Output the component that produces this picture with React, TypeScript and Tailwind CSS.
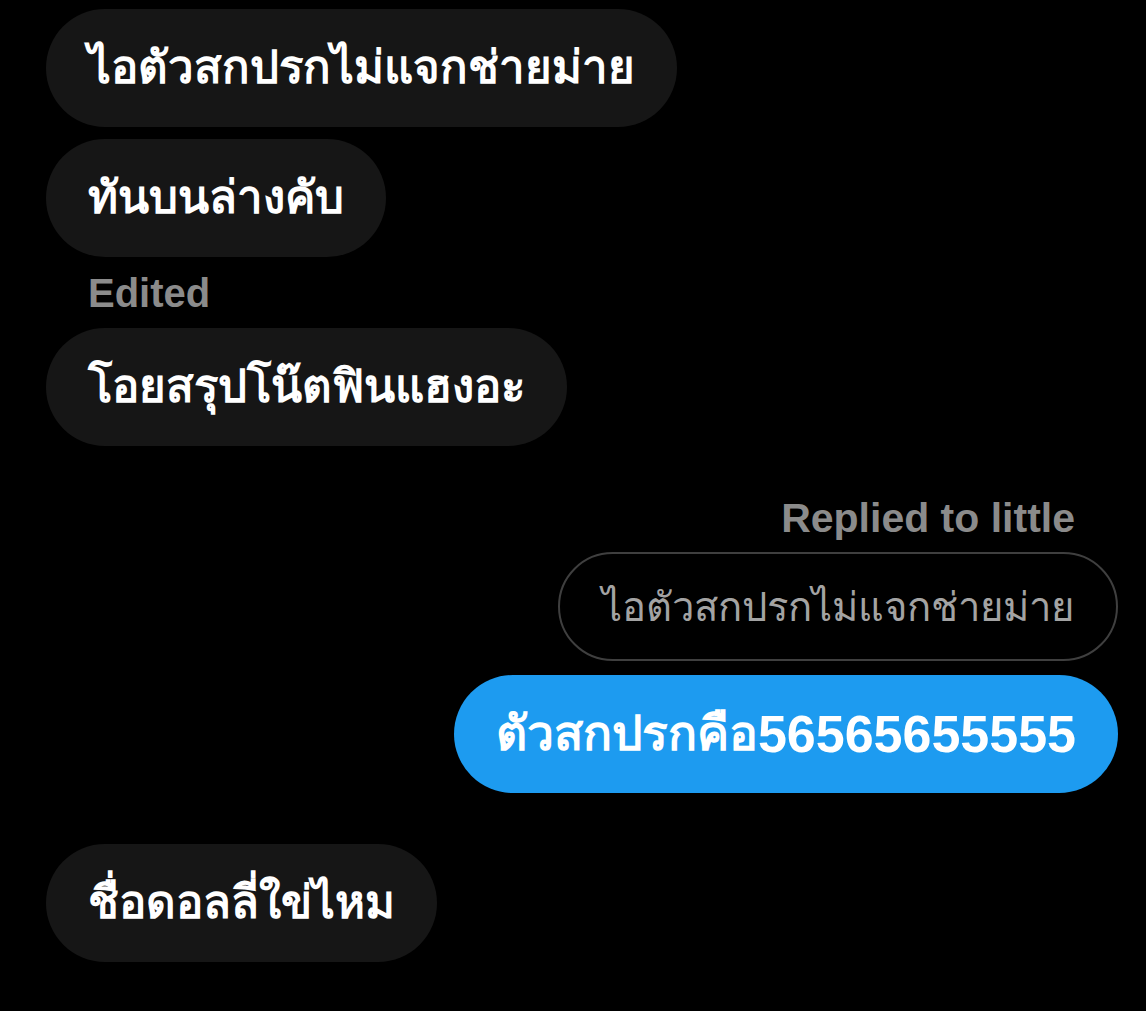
export default function App() {
  return (
    <div className="min-h-[1011px] w-[1146px] bg-black font-['Liberation_Sans',sans-serif] text-white">
      <div className="flex flex-col items-start pt-[9px]">
        <Bubble text="ไอตัวสกปรกไม่แจกช่ายม่าย" />
        <div className="mt-[12px]">
          <Bubble text="ทันบนล่างคับ" />
        </div>
        <p className="ml-[88px] mt-[14px] text-[40px] font-bold leading-[44px] text-[#8b8b8b]">Edited</p>
        <div className="mt-[13px]">
          <Bubble text="โอยสรุปโน๊ตฟินแฮงอะ" />
        </div>

        <div className="mt-[50px] flex w-full flex-col items-end pr-[28px]">
          <p className="mr-[43px] text-[41px] font-bold leading-[44px] text-[#8b8b8b]">Replied to little</p>
          <div className="mt-[12px] flex h-[109px] items-center rounded-full border-2 border-[#3f3f3f] px-[42px] text-[40px] text-[#a3a3a3]">
            ไอตัวสกปรกไม่แจกช่ายม่าย
          </div>
          <div className="mt-[14px] flex h-[118px] items-center rounded-full bg-[#1d9bf0] px-[42px] text-[48px] font-bold">
            ตัวสกปรกคือ<span className="text-[52px]">56565655555</span>
          </div>
        </div>

        <div className="mt-[51px]">
          <Bubble text="ชื่อดอลลี่ใข่ไหม" />
        </div>
      </div>
    </div>
  );
}

function Bubble({ text }: { text: string }) {
  return (
    <div className="ml-[46px] inline-flex h-[118px] items-center rounded-full bg-[#161616] px-[42px] text-[45.5px] font-bold">
      {text}
    </div>
  );
}
